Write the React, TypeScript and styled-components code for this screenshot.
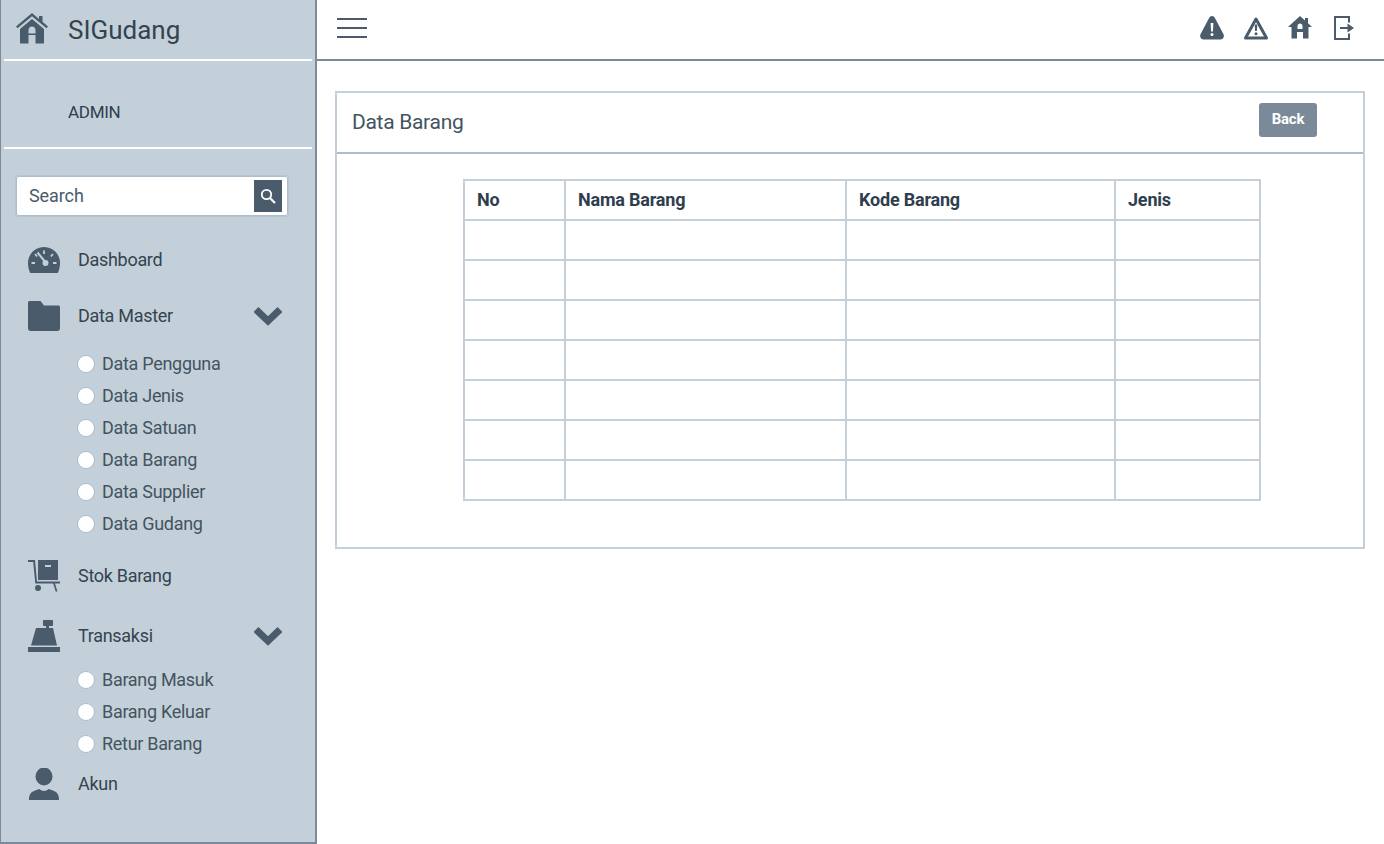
import React from "react";
import styled, { createGlobalStyle } from "styled-components";

const Global = createGlobalStyle`
  html, body { margin: 0; padding: 0; height: 100%; background: #fff; }
  body { font-family: "Roboto", "Liberation Sans", sans-serif; color: #2f3e4e; }
  #root { height: 844px; overflow: hidden; }
  * { box-sizing: border-box; }
`;

const Page = styled.div`
  display: flex;
  width: 1384px;
  height: 844px;
`;
const Sidebar = styled.aside`
  width: 317px;
  height: 844px;
  flex: none;
  background: #c3d0da;
  border-left: 1px solid #7b8a99;
  border-right: 2px solid #7b8a99;
  border-bottom: 2px solid #7b8a99;
  padding: 0 3px;
`;
const Brand = styled.div`
  height: 59px;
  display: flex;
  align-items: center;
  padding-left: 12px;
  gap: 20px;
`;
const BrandMark = styled.span`
  display: flex;
  margin-bottom: 3px;
`;
const BrandName = styled.span`
  font-size: 26px;
  letter-spacing: 0;
  line-height: 30px;
  color: #34444f;
`;
const Rule = styled.div`
  height: 2px;
  background: #fff;
  width: 308px;
`;
const UserBlock = styled.div`
  height: 86px;
  display: flex;
  align-items: center;
  padding: 15px 0 0 64px;
  font-size: 17px;
  letter-spacing: -0.3px;
  color: #2f3e4e;
`;
const SearchBox = styled.div`
  margin: 27px 0 0 12px;
  width: 272px;
  height: 40px;
  background: #fff;
  border-radius: 3px;
  box-shadow: inset 0 0 0 1px #aebdca, 0 0 0 1px #b7c5d1;
  display: flex;
  align-items: center;
  justify-content: space-between;
  padding: 0 6px 0 13px;
  font-size: 18px;
  letter-spacing: -0.1px;
  color: #4a5b6b;
`;
const SearchLabel = styled.span`
  padding-bottom: 2px;
`;
const SearchButton = styled.div`
  width: 28px;
  height: 32px;
  background: #4a5b6b;
  display: flex;
  align-items: center;
  justify-content: center;
`;
const Nav = styled.nav`
  display: flex;
  flex-direction: column;
  margin-top: 24px;
`;
const NavRow = styled.div<{ $top: number }>`
  height: 40px;
  margin-top: ${(p) => p.$top}px;
  display: flex;
  align-items: center;
  padding-left: 24px;
  font-size: 18px;
  letter-spacing: -0.3px;
  color: #34444f;
`;
const NavIcon = styled.span`
  width: 32px;
  height: 40px;
  flex: none;
  display: flex;
  align-items: center;
  justify-content: center;
  margin-right: 18px;
`;
const NavLabel = styled.span`
  flex: 1;
  padding-bottom: 2px;
`;
const Chevron = styled.span`
  width: 32px;
  display: flex;
  justify-content: center;
  margin-right: 28px;
`;
const SubList = styled.ul<{ $top: number }>`
  list-style: none;
  margin: ${(p) => p.$top}px 0 0;
  padding: 0 0 0 74px;
`;
const SubItem = styled.li`
  height: 32px;
  display: flex;
  align-items: center;
  gap: 8px;
  font-size: 18px;
  letter-spacing: -0.3px;
  color: #44545f;
`;
const SubLabel = styled.span`
  padding-bottom: 2px;
`;
const Dot = styled.span`
  width: 16px;
  height: 16px;
  border-radius: 50%;
  background: #fff;
  box-shadow: 0 0 0 1px #aebdca;
  flex: none;
`;
const Main = styled.main`
  flex: 1;
  min-width: 0;
`;
const TopBar = styled.header`
  height: 61px;
  border-bottom: 2px solid #7b8a99;
  display: flex;
  align-items: center;
  justify-content: space-between;
  padding: 0 26px 4px 20px;
`;
const Burger = styled.div`
  width: 30px;
  height: 20px;
  display: flex;
  flex-direction: column;
  justify-content: space-between;
  margin-top: 1px;
  & > i { display: block; height: 2px; background: #4a5b6b; }
`;
const TopIcons = styled.div`
  display: flex;
  align-items: center;
  gap: 16px;
`;
const TopIcon = styled.span`
  width: 28px;
  height: 28px;
  display: flex;
  align-items: center;
  justify-content: center;
`;
const Card = styled.section`
  margin: 30px 19px 0 18px;
  height: 458px;
  border: 2px solid #c3d0da;
`;
const CardHead = styled.div`
  height: 61px;
  border-bottom: 2px solid #aebdca;
  display: flex;
  align-items: center;
  justify-content: space-between;
  padding: 0 46px 2px 15px;
`;
const CardTitle = styled.h2`
  margin: 0;
  font-weight: 400;
  font-size: 21px;
  letter-spacing: -0.3px;
  color: #44545f;
`;
const BackButton = styled.button`
  width: 58px;
  height: 34px;
  background: #7b8a99;
  border: 0;
  border-radius: 3px;
  color: #fff;
  font: 700 15px "Roboto", sans-serif;
  letter-spacing: -0.2px;
  padding: 0 0 2px;
  margin-bottom: 3px;
`;
const TableWrap = styled.div`
  padding: 25px 0 0 126px;
`;
const Table = styled.table`
  border-collapse: collapse;
  table-layout: fixed;
  width: 798px;
  height: 322px;
  font-size: 18px;
  th, td {
    border: 2px solid #c3d0da;
    padding: 0 0 0 12px;
    text-align: left;
    height: 40px;
  }
  th {
    font-weight: 700;
    letter-spacing: -0.2px;
    color: #2f3e4e;
    padding-bottom: 2px;
  }
`;

const C = "#4a5b6b";

const HomeIcon = () => (
  <svg width="32" height="31" viewBox="0 0 32 31" fill={C}>
    <path d="M16 0 0 13.500 1.500 15.300 16 3.200 30.500 15.300 32 13.500 26.500 8.800V3h-3.500v2.900Z" />
    <path fillRule="evenodd" d="M16 6 4 16v14.500h8.500V22h7v8.500H28V16ZM12.500 17c0-2 1.500-3.500 3.500-3.500s3.500 1.500 3.500 3.500v3.500h-7Z" />
  </svg>
);

const SolidHome = () => (
  <svg width="24" height="23" viewBox="0 0 24 23" fill={C}>
    <path fillRule="evenodd" d="M12 0 0 11h3.500v11.500h5.500V16h6v6.500h5.500V11H24l-4-3.700V2h-3v2.600ZM9.500 10c0-1.400 1.100-2.500 2.500-2.500s2.500 1.100 2.500 2.500v3h-5Z" />
  </svg>
);

const Folder = () => (
  <svg width="32" height="30" viewBox="0 0 32 30" fill={C}>
    <path d="M0 1.500C0 .7.7 0 1.500 0h11l3.500 4.500h14.500C31.300 4.500 32 5.200 32 6v21.500c0 1.400-1.100 2.500-2.500 2.500h-27C1.100 30 0 28.900 0 27.500Z" />
  </svg>
);

const Gauge = () => (
  <svg width="32" height="26" viewBox="0 0 32 26">
    <path fill={C} d="M16 0C7.200 0 0 7.200 0 16c0 3.700.8 7.200 2.200 10h27.600c1.400-2.800 2.200-6.300 2.200-10C32 7.200 24.800 0 16 0Z" />
    <path stroke="#c3d0da" strokeWidth="1.800" d="M16 3.500v3.500M25 7l-2.200 2.500M28.500 16h-3.500M3.500 16h3.500M7 7l2.200 2.500" />
    <path stroke="#c3d0da" strokeWidth="2" d="M9.500 5.500 16.500 14" />
    <circle cx="17.500" cy="16" r="3" fill="#c3d0da" />
  </svg>
);

const Cart = () => (
  <svg width="32" height="32" viewBox="0 0 32 32" fill={C}>
    <path d="M10 0h20v20H10Z" />
    <path fill="#c3d0da" d="M17 5h6v2h-6Z" />
    <path d="M0 0h7l2 21.500H32v2H7.300L5.200 2H0Z" />
    <circle cx="10" cy="28" r="3" />
    <path d="M25 23h1.800l2.700 8.500h-1.800Z" />
  </svg>
);

const Register = () => (
  <svg width="32" height="32" viewBox="0 0 32 32" fill={C}>
    <path d="M15 1c0-.6.4-1 1-1h8c.6 0 1 .4 1 1v4c0 .6-.4 1-1 1h-3v2h-3V6h-2c-.6 0-1-.4-1-1Z" />
    <path d="M8 8h17l4 17.500H3Z" />
    <path d="M0 27h32v5H0Z" />
  </svg>
);

const Person = () => (
  <svg width="32" height="32" viewBox="0 0 32 32" fill={C}>
    <ellipse cx="16" cy="8.500" rx="8.500" ry="9" />
    <path d="M1 32c0-5 1.500-8 6-9.500l4.500-1.500c1 1.300 3 2 4.500 2s3.500-.7 4.500-2l4.500 1.500c4.500 1.500 6 4.500 6 9.500Z" />
  </svg>
);

const Chev = () => (
  <svg width="30" height="20" viewBox="0 0 30 20">
    <path d="M3 3.500 15 15 27 3.500" fill="none" stroke={C} strokeWidth="7" strokeLinejoin="miter" />
  </svg>
);

const WarnFilled = () => (
  <svg width="24" height="24" viewBox="0 0 24 24">
    <path fill={C} d="M12 0c1.300 0 2.200.8 2.900 2l8.500 16c1.300 2.600-.2 5.500-3 5.500H3.600c-2.800 0-4.300-2.900-3-5.500L9.100 2C9.800.8 10.700 0 12 0Z" />
    <path fill="#fff" d="M10.600 7h2.800l-.5 8.500h-1.800Z" />
    <circle cx="12" cy="18.500" r="1.500" fill="#fff" />
  </svg>
);

const WarnOutline = () => (
  <svg width="24" height="24" viewBox="0 0 24 24">
    <path fill="none" stroke={C} strokeWidth="3" strokeLinejoin="round" d="M12 3 22.500 22H1.500Z" />
    <path fill={C} d="M10.700 8.500h2.600l-.4 6.500h-1.800Z" />
    <circle cx="12" cy="17.800" r="1.500" fill={C} />
  </svg>
);

const Exit = () => (
  <svg width="20" height="24" viewBox="0 0 20 24" fill="none" stroke={C} strokeWidth="2">
    <path d="M15 6.500V1H1v22h14v-5.500" />
    <path d="M6 12h9" />
    <path fill={C} stroke="none" d="M13.500 7.500 20 12l-6.500 4.500Z" />
  </svg>
);

const SearchGlyph = () => (
  <svg width="16" height="16" viewBox="0 0 16 16" fill="none" stroke="#fff" strokeWidth="1.800">
    <circle cx="6.500" cy="6.500" r="4.700" />
    <path d="m10 10 5 5" strokeWidth="2.200" />
  </svg>
);

const master = ["Data Pengguna", "Data Jenis", "Data Satuan", "Data Barang", "Data Supplier", "Data Gudang"];
const trans = ["Barang Masuk", "Barang Keluar", "Retur Barang"];

export default function App() {
  return (
    <Page>
      <Global />
      <Sidebar>
        <Brand>
          <BrandMark><HomeIcon /></BrandMark>
          <BrandName>SIGudang</BrandName>
        </Brand>
        <Rule />
        <UserBlock>ADMIN</UserBlock>
        <Rule />
        <SearchBox>
          <SearchLabel>Search</SearchLabel>
          <SearchButton><SearchGlyph /></SearchButton>
        </SearchBox>
        <Nav>
          <NavRow $top={0}>
            <NavIcon><Gauge /></NavIcon>
            <NavLabel>Dashboard</NavLabel>
          </NavRow>
          <NavRow $top={16}>
            <NavIcon><Folder /></NavIcon>
            <NavLabel>Data Master</NavLabel>
            <Chevron><Chev /></Chevron>
          </NavRow>
          <SubList $top={12}>
            {master.map((m) => <SubItem key={m}><Dot /><SubLabel>{m}</SubLabel></SubItem>)}
          </SubList>
          <NavRow $top={16}>
            <NavIcon><Cart /></NavIcon>
            <NavLabel>Stok Barang</NavLabel>
          </NavRow>
          <NavRow $top={20}>
            <NavIcon><Register /></NavIcon>
            <NavLabel>Transaksi</NavLabel>
            <Chevron><Chev /></Chevron>
          </NavRow>
          <SubList $top={8}>
            {trans.map((m) => <SubItem key={m}><Dot /><SubLabel>{m}</SubLabel></SubItem>)}
          </SubList>
          <NavRow $top={4}>
            <NavIcon><Person /></NavIcon>
            <NavLabel>Akun</NavLabel>
          </NavRow>
        </Nav>
      </Sidebar>
      <Main>
        <TopBar>
          <Burger><i /><i /><i /></Burger>
          <TopIcons>
            <TopIcon><WarnFilled /></TopIcon>
            <TopIcon><WarnOutline /></TopIcon>
            <TopIcon><SolidHome /></TopIcon>
            <TopIcon><Exit /></TopIcon>
          </TopIcons>
        </TopBar>
        <Card>
          <CardHead>
            <CardTitle>Data Barang</CardTitle>
            <BackButton>Back</BackButton>
          </CardHead>
          <TableWrap>
            <Table>
              <colgroup>
                <col style={{ width: 101 }} />
                <col style={{ width: 281 }} />
                <col style={{ width: 269 }} />
                <col style={{ width: 145 }} />
              </colgroup>
              <thead>
                <tr><th>No</th><th>Nama Barang</th><th>Kode Barang</th><th>Jenis</th></tr>
              </thead>
              <tbody>
                {[0, 1, 2, 3, 4, 5, 6].map((r) => (
                  <tr key={r}><td /><td /><td /><td /></tr>
                ))}
              </tbody>
            </Table>
          </TableWrap>
        </Card>
      </Main>
    </Page>
  );
}
